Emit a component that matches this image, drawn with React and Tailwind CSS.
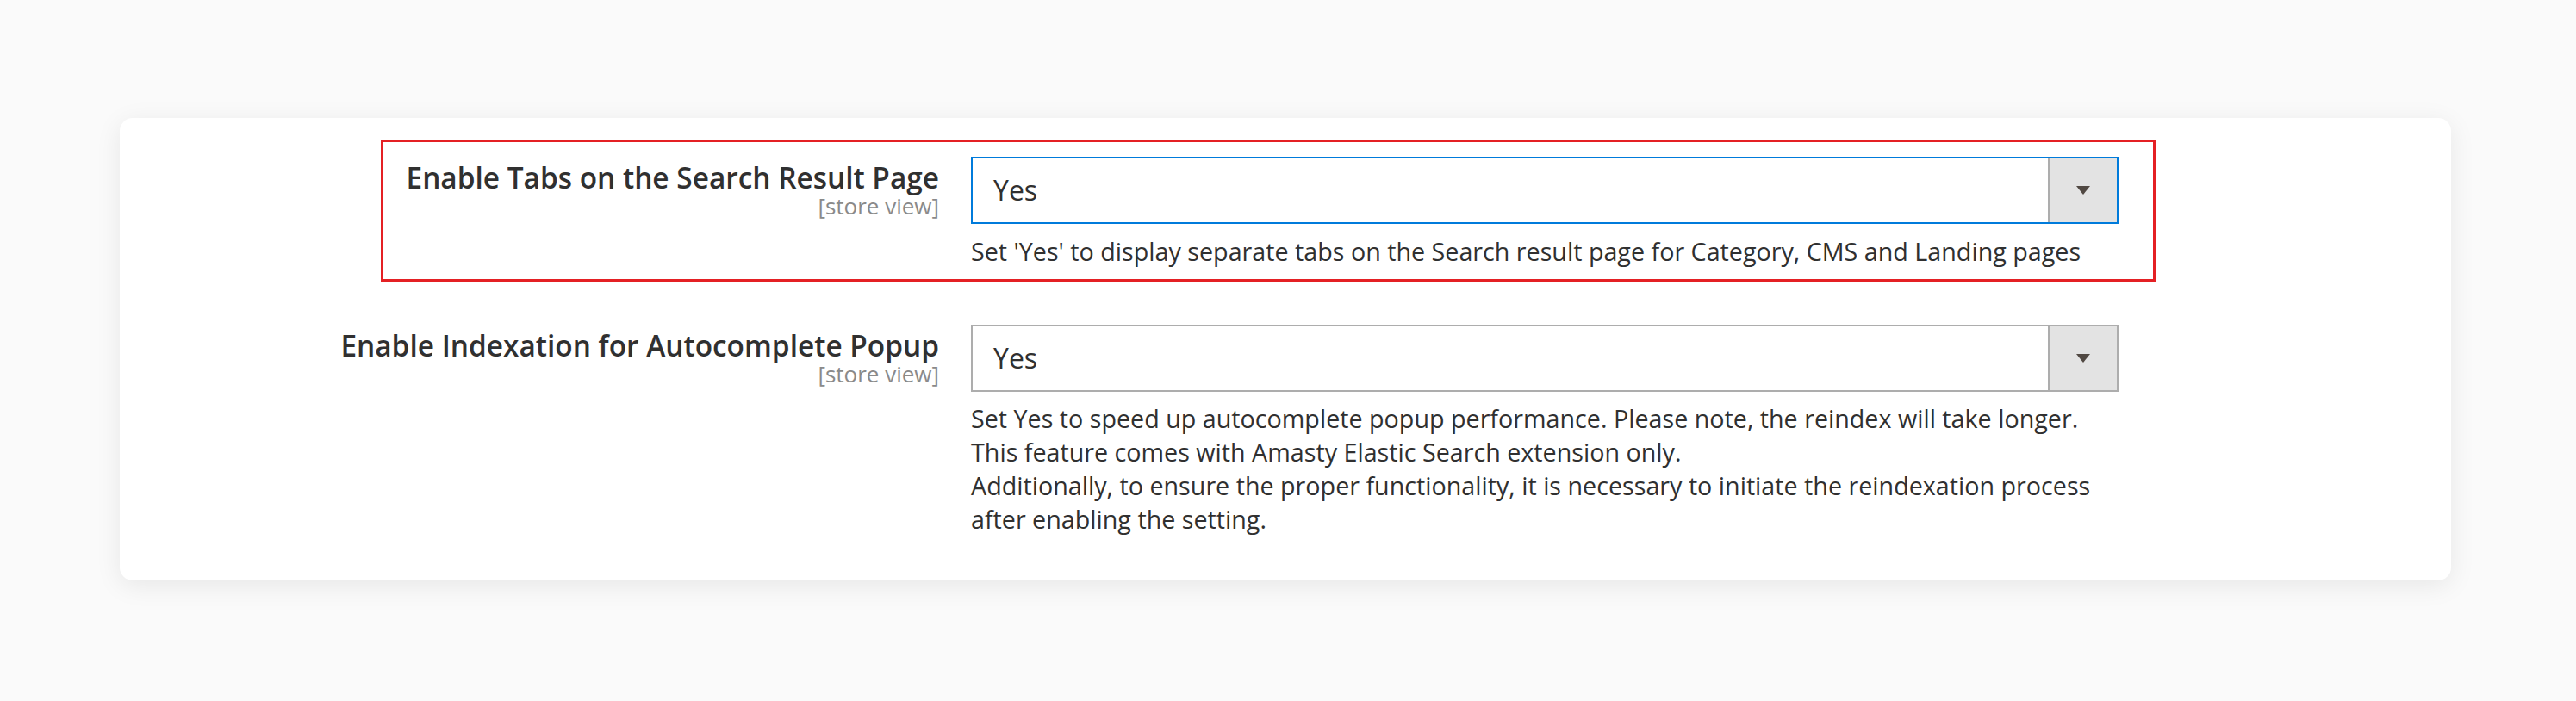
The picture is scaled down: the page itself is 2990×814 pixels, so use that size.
import React from 'react';

const font = { fontFamily: '"Open Sans", "Noto Sans", sans-serif' };

const Arrow = () => (
  <svg width="18" height="12" viewBox="0 0 18 12" className="block">
    <path d="M1 1 H17 L9 11 Z" fill="#514943" />
  </svg>
);

const SelectBox = ({ value, focused }) => (
  <div
    className={`flex h-[78px] w-[1332px] border-2 bg-white ${
      focused ? 'border-[#007bdb]' : 'border-[#adadad]'
    }`}
  >
    <div className="flex flex-1 items-center pl-[24px] text-[32px] text-[#303030]">{value}</div>
    <div className="flex w-[80px] items-center justify-center border-l-2 border-[#adadad] bg-[#e3e3e3]">
      <Arrow />
    </div>
  </div>
);

const Label = ({ title, scope, width }) => (
  <div className={`${width} shrink-0 pt-[6px] text-right`}>
    <div className="text-[33.4px] font-semibold leading-[36px] text-[#303030]">{title}</div>
    <div className="text-[26px] leading-[30px] text-[#8a8a8a]">{scope}</div>
  </div>
);

export default function App() {
  return (
    <div className="min-h-[814px] bg-[#fafafa] pt-[137px]" style={font}>
      <div className="ml-[139px] w-[2706px] rounded-[15px] bg-white pb-[52px] pl-[161px] pt-[25px] shadow-[0_6px_30px_rgba(0,0,0,0.08)]">
        {/* highlighted row */}
        <div className="ml-[142px] w-[2060px] border-[3px] border-[#e42024] pb-[13px] pt-[17px]">
          <div className="flex gap-[37px]">
            <Label title="Enable Tabs on the Search Result Page" scope="[store view]" width="w-[645px]" />
            <div>
              <SelectBox value="Yes" focused />
              <p className="mt-[12px] text-[28.7px] leading-[39px] text-[#303030]">
                Set 'Yes' to display separate tabs on the Search result page for Category, CMS and Landing pages
              </p>
            </div>
          </div>
        </div>

        <div className="mt-[50px] flex gap-[37px]">
          <Label title="Enable Indexation for Autocomplete Popup" scope="[store view]" width="w-[790px]" />
          <div className="w-[1332px]">
            <SelectBox value="Yes" />
            <p className="mt-[11px] text-[28.7px] leading-[39px] text-[#303030]">
              Set Yes to speed up autocomplete popup performance. Please note, the reindex will take longer.
              <br />
              This feature comes with Amasty Elastic Search extension only.
              <br />
              Additionally, to ensure the proper functionality, it is necessary to initiate the reindexation process after enabling the setting.
            </p>
          </div>
        </div>
      </div>
    </div>
  );
}
